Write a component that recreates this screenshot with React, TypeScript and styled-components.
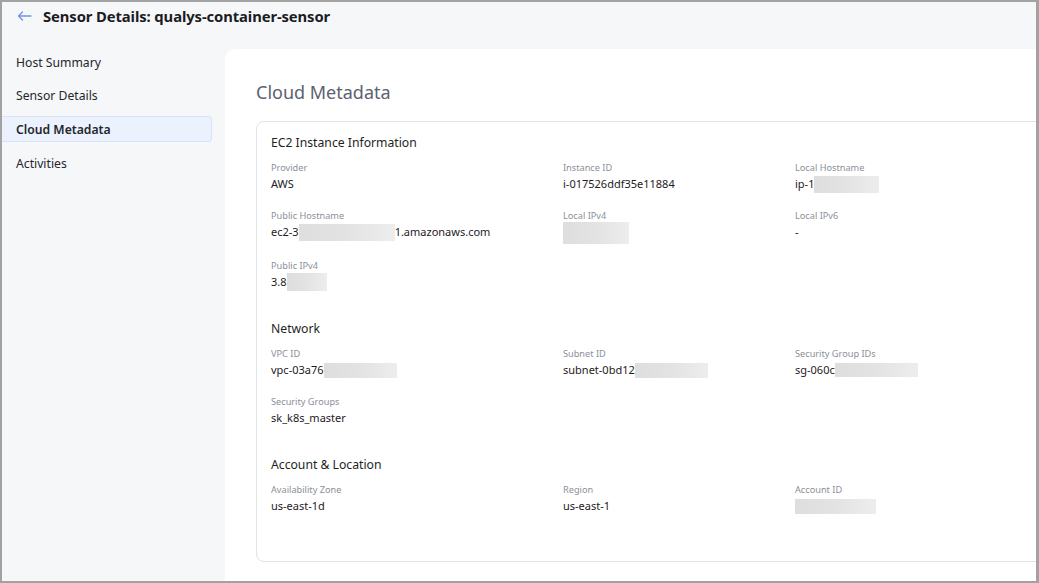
import { createGlobalStyle, styled } from "styled-components";

const GlobalStyle = createGlobalStyle`
  html, body {
    margin: 0;
    padding: 0;
  }
  body {
    font-family: "Noto Sans", "Open Sans", sans-serif;
    -webkit-font-smoothing: antialiased;
  }
  * {
    box-sizing: border-box;
  }
`;

const Frame = styled.div`
  width: 1039px;
  height: 583px;
  border-style: solid;
  border-color: #a2a2a2;
  border-width: 2px 3px 2px 2px;
  background: #f6f7f9;
  display: flex;
  flex-direction: column;
  overflow: hidden;
`;

const Header = styled.div`
  height: 28px;
  display: flex;
  align-items: center;
  gap: 11px;
  padding-left: 15px;
`;

const BackButton = styled.button`
  border: 0;
  background: none;
  padding: 0;
  display: flex;
  align-items: center;
  cursor: pointer;
`;

const Title = styled.h1`
  margin: 0;
  font-size: 14.8px;
  font-weight: 700;
  color: #1b1c1f;
  letter-spacing: -0.1px;
`;

const Body = styled.div`
  flex: 1;
  display: flex;
  gap: 13px;
  padding-top: 19px;
  min-height: 0;
`;

const Sidebar = styled.nav`
  width: 210px;
  display: flex;
  flex-direction: column;
  gap: 7.7px;
`;

const NavItem = styled.div<{ $active?: boolean }>`
  height: 26px;
  display: flex;
  align-items: center;
  padding-left: 14px;
  font-size: 12.2px;
  color: #24262b;
  font-weight: ${(p) => (p.$active ? 600 : 400)};
  background: ${(p) => (p.$active ? "#ebf2fe" : "transparent")};
  border: 1px solid ${(p) => (p.$active ? "#d7e4fb" : "transparent")};
  border-left: 0;
  border-radius: 0 4px 4px 0;
  cursor: pointer;
`;

const Panel = styled.main`
  flex: 1;
  background: #ffffff;
  border-top-left-radius: 10px;
  padding: 29px 0 20px 31px;
  overflow: hidden;
  display: flex;
  flex-direction: column;
`;

const PanelTitle = styled.h2`
  margin: 0 0 15px;
  font-size: 18px;
  line-height: 28px;
  font-weight: 400;
  color: #5b6270;
`;

const Card = styled.section`
  margin-right: -14px;
  border: 1px solid #e2e3e5;
  border-radius: 8px;
  padding: 12px 14px 47px;
`;

const Section = styled.div`
  & + & {
    margin-top: 30px;
  }
`;

const SectionTitle = styled.h3`
  margin: 0 0 9px;
  font-size: 12.2px;
  line-height: 18px;
  font-weight: 400;
  color: #1d1f23;
`;

const FieldGrid = styled.div`
  display: grid;
  grid-template-columns: 292px 232px 1fr;
  row-gap: 17px;
`;

const Field = styled.div`
  display: flex;
  flex-direction: column;
  gap: 1px;
`;

const Label = styled.span`
  font-size: 9.2px;
  line-height: 14px;
  color: #8b9099;
`;

const Value = styled.span`
  font-size: 11px;
  line-height: 16px;
  min-height: 16px;
  color: #1e2024;
  display: flex;
  align-items: center;
  white-space: nowrap;
`;

const Redacted = styled.span<{ $w: number; $h: number }>`
  display: inline-block;
  flex-shrink: 0;
  width: ${(p) => p.$w}px;
  height: ${(p) => p.$h}px;
  margin: ${(p) => (p.$h > 20 ? -2 : (16 - p.$h) / 2)}px 0;
  background: linear-gradient(90deg, #dedede 0%, #e3e3e3 50%, #ededed 100%);
`;

type Item = { label: string; value?: string; hide?: number; hideH?: number; after?: string };

const sections: { title: string; items: Item[] }[] = [
  {
    title: "EC2 Instance Information",
    items: [
      { label: "Provider", value: "AWS" },
      { label: "Instance ID", value: "i-017526ddf35e11884" },
      { label: "Local Hostname", value: "ip-1", hide: 65 },
      { label: "Public Hostname", value: "ec2-3", hide: 96, after: "1.amazonaws.com" },
      { label: "Local IPv4", value: "", hide: 66, hideH: 22 },
      { label: "Local IPv6", value: "-" },
      { label: "Public IPv4", value: "3.8", hide: 40, hideH: 18 },
    ],
  },
  {
    title: "Network",
    items: [
      { label: "VPC ID", value: "vpc-03a76", hide: 73, hideH: 15 },
      { label: "Subnet ID", value: "subnet-0bd12", hide: 73, hideH: 15 },
      { label: "Security Group IDs", value: "sg-060c", hide: 83, hideH: 14 },
      { label: "Security Groups", value: "sk_k8s_master" },
    ],
  },
  {
    title: "Account & Location",
    items: [
      { label: "Availability Zone", value: "us-east-1d" },
      { label: "Region", value: "us-east-1" },
      { label: "Account ID", value: "", hide: 81, hideH: 15 },
    ],
  },
];

const navItems = ["Host Summary", "Sensor Details", "Cloud Metadata", "Activities"];

export default function App() {
  return (
    <>
      <GlobalStyle />
      <Frame>
        <Header>
          <BackButton aria-label="Back">
            <svg width="15" height="10" viewBox="0 0 15 10" fill="none">
              <path d="M14 5H1.5M5.5 1L1.5 5l4 4" stroke="#6f96e2" strokeWidth="1.3" strokeLinecap="round" strokeLinejoin="round" />
            </svg>
          </BackButton>
          <Title>Sensor Details: qualys-container-sensor</Title>
        </Header>
        <Body>
          <Sidebar>
            {navItems.map((n) => (
              <NavItem key={n} $active={n === "Cloud Metadata"}>
                {n}
              </NavItem>
            ))}
          </Sidebar>
          <Panel>
            <PanelTitle>Cloud Metadata</PanelTitle>
            <Card>
              {sections.map((s) => (
                <Section key={s.title}>
                  <SectionTitle>{s.title}</SectionTitle>
                  <FieldGrid>
                    {s.items.map((it) => (
                      <Field key={it.label}>
                        <Label>{it.label}</Label>
                        <Value>
                          {it.value}
                          {it.hide ? <Redacted $w={it.hide} $h={it.hideH ?? 17} /> : null}
                          {it.after}
                        </Value>
                      </Field>
                    ))}
                  </FieldGrid>
                </Section>
              ))}
            </Card>
          </Panel>
        </Body>
      </Frame>
    </>
  );
}
